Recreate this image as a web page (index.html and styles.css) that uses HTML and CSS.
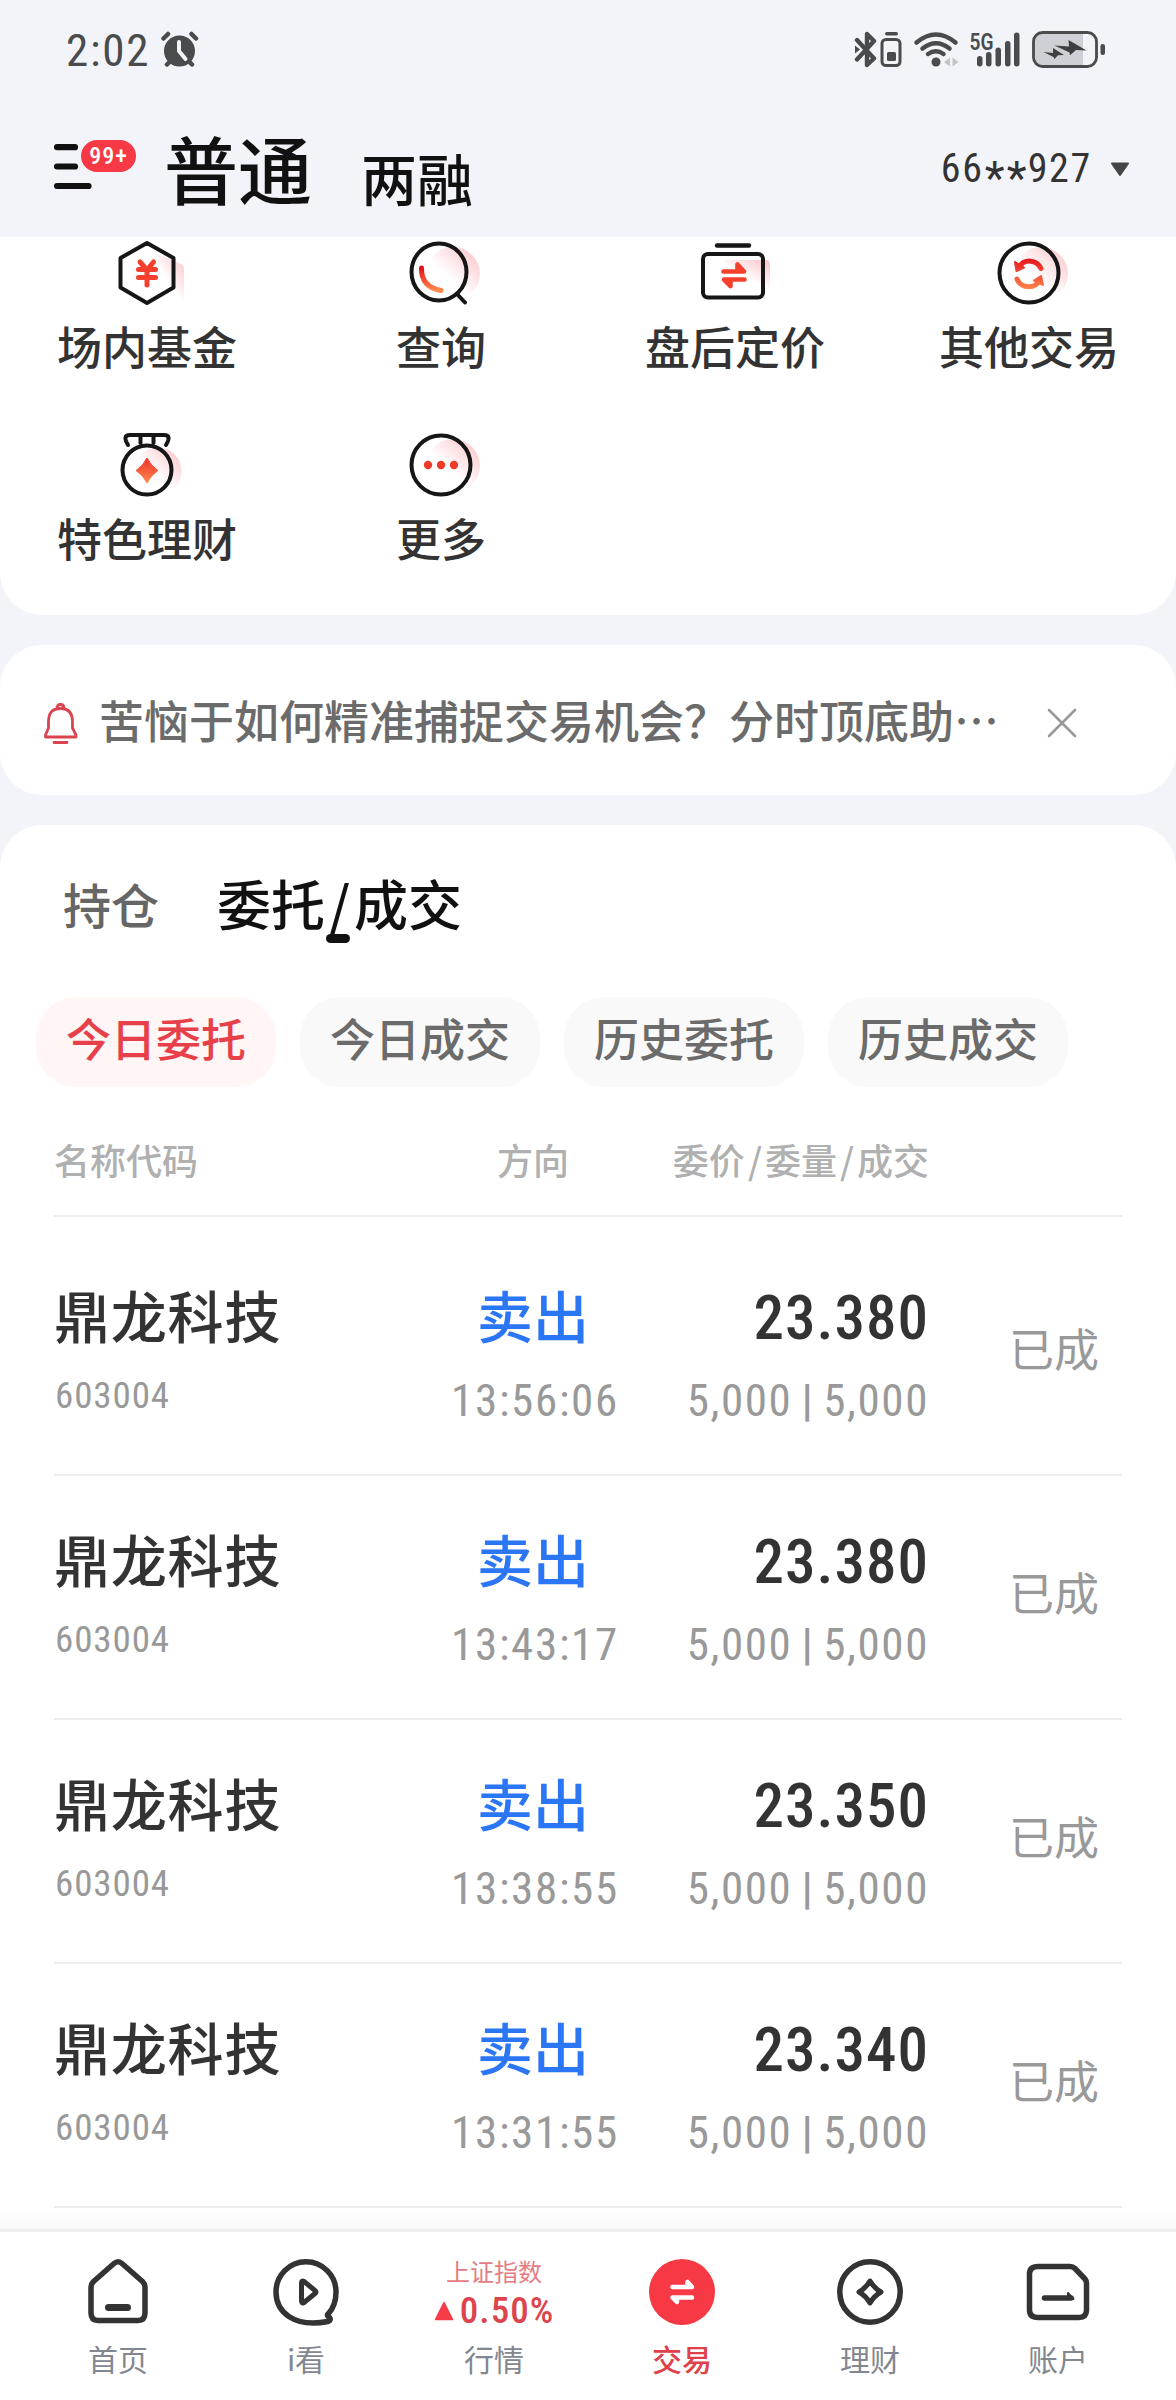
FILE: index.html
```html
<!DOCTYPE html>
<html lang="zh-CN">
<head>
<meta charset="utf-8">
<title>交易</title>
<link rel="stylesheet" href="styles.css">
</head>
<body>
<svg class="defs" width="0" height="0" aria-hidden="true">
  <defs>
    <linearGradient id="hot" x1="0" y1="0" x2="0" y2="1"><stop offset="0" stop-color="#e60f1c"/><stop offset="1" stop-color="#ff8a4c"/></linearGradient>
    <linearGradient id="hotSpan" gradientUnits="userSpaceOnUse" x1="0" y1="-16" x2="0" y2="18"><stop offset="0" stop-color="#e60f1c"/><stop offset="1" stop-color="#ff8a4c"/></linearGradient>
    <linearGradient id="glow" x1="1" y1="0.1" x2="0.5" y2="0.65"><stop offset="0" stop-color="#fbc6c9"/><stop offset="1" stop-color="#fbc6c9" stop-opacity="0"/></linearGradient>
  </defs>
</svg>

<div class="status">
  <div class="status-left">
    <span class="clock num">2:02</span>
    <svg class="alarm" width="38" height="40" viewBox="0 0 38 40"><circle cx="18.500" cy="21" r="15.500" fill="#4a4b4d"/><path d="M2.500 8.500L7 4M35 8.500L30.500 4M6 34.500L8 32.500M31 34.500L29 32.500" stroke="#4a4b4d" stroke-width="4.500" stroke-linecap="round"/><path d="M18 12v9l6.500 8" fill="none" stroke="#f3f4f9" stroke-width="4" stroke-linecap="round" stroke-linejoin="round"/></svg>
  </div>
  <div class="status-right">
    <svg width="252" height="50" viewBox="854 20 252 50" fill="none">
      <path d="M857 40L874 58.500L867 65V34L874 41L857 59.500" stroke="#4a4b4d" stroke-width="4.400" stroke-linecap="round" stroke-linejoin="round"/>
      <path d="M855 45.500l5 4-5 4z" fill="#4a4b4d"/>
      <rect x="882" y="39.500" width="18" height="26" rx="4" stroke="#4a4b4d" stroke-width="3"/>
      <rect x="885" y="32" width="13" height="3.500" rx="1.700" fill="#4a4b4d"/>
      <rect x="887" y="52" width="9" height="9" rx="1.500" fill="#4a4b4d"/>
      <path d="M916.500 42.500Q936 26.500 955.500 42.500M922.500 48.500Q936 38 949.500 48.500M928 54Q936 48.500 943.500 54" stroke="#4a4b4d" stroke-width="4.500" stroke-linecap="round"/>
      <circle cx="936" cy="62" r="4.500" fill="#4a4b4d"/>
      <path d="M950 57.500v9l-6-4.500zM952.500 57.500v9l6-4.500z" fill="#c3c4c8"/>
      <g fill="#4a4b4d"><rect x="977" y="56" width="5.500" height="10.500" rx="2.700"/><rect x="986" y="52" width="5.500" height="14.500" rx="2.700"/><rect x="995.500" y="47.500" width="5.500" height="19" rx="2.700"/><rect x="1005" y="41" width="5.500" height="25.500" rx="2.700"/><rect x="1014" y="32.500" width="5.500" height="34" rx="2.700"/></g>
      <text x="969.500" y="49.500" class="net" textLength="24" lengthAdjust="spacingAndGlyphs">5G</text>
      <path d="M1043 33h40v34h-40q-9 0-9-9v-16q0-9 9-9z" fill="#cfd0d5"/>
      <rect x="1033.500" y="32.500" width="63" height="34" rx="9" stroke="#4a4b4d" stroke-width="2.800"/>
      <rect x="1100.500" y="44" width="4.500" height="11" rx="2.200" fill="#4a4b4d"/>
      <path d="M1054.500 45.500L1069 46.500 1068.500 40 1078 45.500 1086.500 50.500 1076 50 1070 55.200 1069.500 52.500zM1043.500 52L1053 53 1053 48 1064 55 1058 55.200 1054.500 59 1053.500 57z" fill="#3f4042"/>
    </svg>
  </div>
</div>

<header class="header">
  <div class="menu">
    <svg width="40" height="48" viewBox="0 0 40 48"><path d="M3 5.200H21M3 24.500H21M3 44H34.500" stroke="#111" stroke-width="6.200" stroke-linecap="round"/></svg>
    <span class="badge num">99+</span>
  </div>
  <span class="acct-main">普通</span>
  <span class="acct-alt">两融</span>
  <div class="account num">66<i>*</i><i>*</i>927<svg width="20" height="15" viewBox="0 0 20 15"><path d="M2 1.500h16l-8 11.500z" fill="#444547" stroke="#444547" stroke-width="2" stroke-linejoin="round"/></svg></div>
</header>

<main>
<section class="card grid">
  <div class="tool">
    <svg viewBox="-50 -36 100 72"><path d="M8-20L34-9Q37-8 37-4V28Q20 20 8-20z" fill="url(#glow)"/><path d="M0-30L26.500-15V14.500L0 30-26.500 14.500V-15z" fill="none" stroke="#161616" stroke-width="4" stroke-linejoin="round"/><path d="M-7-11L0-3 6.500-11M-8.500-3.500H8.500M-8.500 4.500H8.500M0-3V12" fill="none" stroke="#f4402c" stroke-width="5" stroke-linecap="round"/></svg>
    <span>场内基金</span>
  </div>
  <div class="tool">
    <svg viewBox="-50 -36 100 72"><circle cx="12" cy="1" r="27" fill="url(#glow)"/><ellipse cx="-2" cy="-1" rx="27.500" ry="28.500" fill="none" stroke="#161616" stroke-width="4"/><path d="M16.500 21.500L24 29.500" stroke="#161616" stroke-width="4" stroke-linecap="round"/><path d="M-19.500-5Q-20 14 0 17.500" fill="none" stroke="url(#hot)" stroke-width="5" stroke-linecap="round"/></svg>
    <span>查询</span>
  </div>
  <div class="tool">
    <svg viewBox="-50 -36 100 72"><path d="M-12-13H31Q35-13 35-8V15H18z" fill="url(#glow)"/><rect x="-32" y="-19" width="60" height="43.500" rx="5" fill="none" stroke="#161616" stroke-width="4"/><path d="M-18-27.500H14" stroke="#161616" stroke-width="4.400" stroke-linecap="round"/><path d="M-11.500-1.500H9L2.500-8.500V-3M9.500 6.500H-11L-4.500 13V8" fill="none" stroke="#f4402c" stroke-width="4.600" stroke-linecap="round" stroke-linejoin="round"/></svg>
    <span>盘后定价</span>
  </div>
  <div class="tool">
    <svg viewBox="-50 -36 100 72"><circle cx="12" cy="1" r="27" fill="url(#glow)"/><circle r="29.500" fill="none" stroke="#161616" stroke-width="4"/><path d="M-10-6A12.500 12.500 0 0 1 12-4.500M-12 6A12.500 12.500 0 0 0 11 6.500" fill="none" stroke="url(#hotSpan)" stroke-width="5" stroke-linecap="round"/><path d="M-14-11l9 5.500-7.500 3.500zM14 12l-9-4.500L12 3z" fill="url(#hotSpan)" stroke="url(#hotSpan)" stroke-width="2" stroke-linejoin="round"/></svg>
    <span>其他交易</span>
  </div>
  <div class="tool">
    <svg viewBox="-50 -36 100 72"><circle cx="11" cy="6" r="23.500" fill="url(#glow)"/><circle cy="5" r="24.500" fill="none" stroke="#161616" stroke-width="4"/><path d="M-19-20Q-25-30-17-30H17Q25-30 19-20M-6.500-29V-22M6.500-29V-22" fill="none" stroke="#161616" stroke-width="4" stroke-linecap="round"/><path d="M0-7Q4 1 11 5.500 4 10 0 18-4 10-11 5.500-4 1 0-7z" fill="url(#hotSpan)" stroke="url(#hotSpan)" stroke-linejoin="round"/></svg>
    <span>特色理财</span>
  </div>
  <div class="tool">
    <svg viewBox="-50 -36 100 72"><circle cx="12" cy="1" r="27" fill="url(#glow)"/><circle r="29.500" fill="none" stroke="#161616" stroke-width="4"/><g fill="#ee3a28"><circle cx="-13" r="4.200"/><circle r="4.200"/><circle cx="13" r="4.200"/></g></svg>
    <span>更多</span>
  </div>
</section>

<section class="card notice">
  <svg class="bell" width="34" height="42" viewBox="0 0 34 42" fill="none" stroke="#d9444e" stroke-width="2.800" stroke-linejoin="round" stroke-linecap="round"><path d="M4.500 20C4.500 10 9 6.500 16.500 6.500S28.500 10 28.500 20V26L32 33V35H1.500V33L4.500 26zM13 6.500Q13 2.500 16.500 2.500T20 6.500M10 40.500H23"/></svg>
  <span class="notice-text">苦恼于如何精准捕捉交易机会？分时顶底助…</span>
  <svg class="close" width="30" height="30" viewBox="0 0 30 30"><path d="M2 2L28 28M28 2L2 28" stroke="#999" stroke-width="2.600" stroke-linecap="round"/></svg>
</section>

<section class="card orders">
  <div class="tabs"><span class="tab">持仓</span><span class="tab tab-on">委托<b>/</b>成交</span></div>
  <div class="pills"><span class="pill pill-on">今日委托</span><span class="pill">今日成交</span><span class="pill">历史委托</span><span class="pill">历史成交</span></div>
  <div class="row head"><span>名称代码</span><span class="mid">方向</span><span class="right">委价<b>/</b>委量<b>/</b>成交</span></div>

  <div class="row item">
    <div><div class="name">鼎龙科技</div><div class="code num">603004</div></div>
    <div class="mid"><div class="side">卖出</div><div class="time num">13:56:06</div></div>
    <div class="right"><div class="price num">23.380</div><div class="qty num">5,000<b>|</b>5,000</div></div>
    <div class="state">已成</div>
  </div>
  <div class="row item">
    <div><div class="name">鼎龙科技</div><div class="code num">603004</div></div>
    <div class="mid"><div class="side">卖出</div><div class="time num">13:43:17</div></div>
    <div class="right"><div class="price num">23.380</div><div class="qty num">5,000<b>|</b>5,000</div></div>
    <div class="state">已成</div>
  </div>
  <div class="row item">
    <div><div class="name">鼎龙科技</div><div class="code num">603004</div></div>
    <div class="mid"><div class="side">卖出</div><div class="time num">13:38:55</div></div>
    <div class="right"><div class="price num">23.350</div><div class="qty num">5,000<b>|</b>5,000</div></div>
    <div class="state">已成</div>
  </div>
  <div class="row item">
    <div><div class="name">鼎龙科技</div><div class="code num">603004</div></div>
    <div class="mid"><div class="side">卖出</div><div class="time num">13:31:55</div></div>
    <div class="right"><div class="price num">23.340</div><div class="qty num">5,000<b>|</b>5,000</div></div>
    <div class="state">已成</div>
  </div>
  <div class="fade"></div>
</section>
</main>

<nav class="nav">
  <div class="nav-item">
    <svg viewBox="-36 -36 72 72" fill="none" stroke="#333" stroke-width="5.500" stroke-linejoin="round"><path d="M-4-28.500Q0-32 4-28.500L24.500-10.500Q27-8 27-5V21Q27 28.500 20 28.500H-20Q-27 28.500-27 21V-5Q-27-8-24.500-10.500z"/><path d="M-9.500 15.500H9.500" stroke-width="7" stroke-linecap="round"/></svg>
    <span>首页</span>
  </div>
  <div class="nav-item">
    <svg viewBox="-36 -36 72 72" fill="none" stroke="#333" stroke-width="5.500" stroke-linejoin="round"><path d="M22.500 21.500C27.500 16 30 8 30 0A30 30.200 0 1 0-30 0C-30 20-12 36 22 29.500Q25.500 28 23.500 25.500 20 23.500 22.500 21.500z"/><path d="M-4.500-9Q-4.500-12-2-10.500L9-1.500Q11 0 9 1.500L-2 10.500Q-4.500 12-4.500 9z" stroke-width="5"/></svg>
    <span>i看</span>
  </div>
  <div class="nav-item quote">
    <div class="index-name">上证指数</div>
    <div class="index-val num"><svg width="20" height="20" viewBox="0 0 20 20"><path d="M10 1.500L18.500 18.500H1.500z" fill="#f73b47" stroke="#f73b47" stroke-width="1.500" stroke-linejoin="round"/></svg><em>0.50%</em></div>
    <span>行情</span>
  </div>
  <div class="nav-item on">
    <svg viewBox="-36 -36 72 72"><circle r="33" fill="#f73845"/><path d="M-9.500-5H10L5.500-10V-5.500M10 5.500H-9.500L-5 10V6" fill="none" stroke="#fff" stroke-width="4.500" stroke-linecap="round" stroke-linejoin="round"/></svg>
    <span>交易</span>
  </div>
  <div class="nav-item">
    <svg viewBox="-36 -36 72 72" fill="none" stroke="#333" stroke-width="5.500" stroke-linejoin="round"><circle r="30.200"/><path d="M0-11Q4-4 11 0 4 4 0 11-4 4-11 0-4-4 0-11z" stroke-width="5"/></svg>
    <span>理财</span>
  </div>
  <div class="nav-item">
    <svg viewBox="-36 -36 72 72" fill="none" stroke="#333" stroke-width="5.500" stroke-linejoin="round"><path d="M-20-25.500H12Q15-25.500 17-23.500L27-13Q28.500-11 28.500-9V18Q28.500 25.500 21 25.500H-20Q-28.500 25.500-28.500 18V-18Q-28.500-25.500-20-25.500z"/><path d="M-13.500 6H13" stroke-linecap="round"/><path d="M10 3V1L15.500 7H10z" stroke-width="2" fill="#333"/></svg>
    <span>账户</span>
  </div>
</nav>
</body>
</html>
```
FILE: styles.css
```css
* { box-sizing: border-box; }
body {
  margin: 0;
  width: 1176px;
  height: 2400px;
  overflow: hidden;
  background: #f3f4f9;
  color: #333;
  font-family: "Noto Sans CJK SC", sans-serif;
  font-weight: 500;
  display: flex;
  flex-direction: column;
}
svg { display: block; flex: none; }
b, i, em { font-weight: inherit; font-style: normal; }
.defs { position: absolute; }
.num { font-family: Roboto, "Noto Sans CJK SC", sans-serif; font-stretch: 85%; }

/* system status bar */
.status {
  height: 100px;
  display: flex;
  justify-content: space-between;
  padding: 0 70px 0 66px;
}
.status-left { display: flex; padding-top: 21px; gap: 11px; }
.clock { font-size: 45px; line-height: 60px; font-weight: 400; letter-spacing: 1.8px; color: #4a4b4d; }
.alarm { margin-top: 9px; }
.status-right { padding-top: 20px; }
.net { font: 600 24px Roboto, sans-serif; fill: #4a4b4d; }

/* account header */
.header {
  height: 137px;
  display: flex;
  align-items: flex-start;
  padding: 0 46px 0 54px;
  color: #111;
}
.menu { position: relative; width: 110px; padding-top: 42px; }
.badge {
  position: absolute;
  left: 27px;
  top: 40px;
  width: 55px;
  height: 32px;
  border-radius: 16px;
  background: #f73845;
  color: #fff;
  font-size: 24px;
  line-height: 32px;
  letter-spacing: 1px;
  text-align: center;
}
.acct-main { font-size: 74px; line-height: 100px; margin-top: 17px; }
.acct-alt { font-size: 56px; line-height: 80px; margin: 37px 0 0 49px; }
.account {
  display: flex;
  align-items: center;
  margin: 44px 0 0 auto;
  font-size: 40px;
  line-height: 50px;
  font-weight: 450;
  letter-spacing: 1.7px;
  color: #333;
}
.account i { position: relative; top: 9px; width: 22px; text-align: center; font-size: 46px; letter-spacing: 0; }
.account svg { margin: 0 0 0 18px; }

/* cards */
.card { background: #fff; border-radius: 42px; }
.grid {
  height: 378px;
  border-radius: 0 0 42px 42px;
  display: grid;
  grid-template-columns: repeat(4, 294px);
  grid-auto-rows: 192px;
}
.tool { display: flex; flex-direction: column; align-items: center; }
.tool svg { width: 100px; height: 72px; }
.tool span { font-size: 45px; line-height: 60px; margin-top: 7px; }

.notice {
  height: 150px;
  margin: 30px 0;
  display: flex;
  align-items: center;
  padding: 0 0 0 44px;
}
.bell { margin-top: 6px; }
.notice-text { font-size: 45px; line-height: 60px; color: #6b6b6b; margin: 0 48px 0 21px; }
.close { margin-top: 5px; }

.orders { height: 1404px; border-radius: 42px 42px 0 0; }
.tabs { display: flex; padding: 38px 0 0 63px; height: 172px; align-items: flex-start; }
.tab { font-size: 48px; line-height: 80px; color: #666; margin-right: 58px; }
.tab-on { position: relative; font-size: 54px; color: #111; }
.tab-on b { padding: 0 4px; }
.tab-on::after {
  content: "";
  position: absolute;
  left: 109px;
  top: 71px;
  width: 24px;
  height: 9px;
  border-radius: 4.5px;
  background: #111;
}
.pills { display: flex; gap: 24px; padding-left: 36px; }
.pill {
  width: 240px;
  height: 90px;
  border-radius: 40px;
  background: #f9f9f9;
  color: #6b6b6b;
  font-size: 45px;
  line-height: 82px;
  text-align: center;
}
.pill-on { background: #fff6f5; color: #e8404a; }

.row {
  display: grid;
  grid-template-columns: 363px 232px 280px 1fr;
  margin: 0 54px;
  border-bottom: 2px solid #ededed;
}
.mid { text-align: center; }
.right { text-align: right; }
.head { height: 130px; padding-top: 46px; font-size: 36px; line-height: 52px; color: #b0b0b0; }
.head b { padding: 0 3px; }
.item { height: 244px; }
.head + .item { margin-top: 15px; height: 244px; }
.name, .side { font-size: 56px; line-height: 80px; padding-top: 42px; }
.name { color: #333; letter-spacing: 0.8px; }
.side { color: #2a76f5; }
.code { font-size: 37px; line-height: 50px; margin-top: 17px; color: #999; font-weight: 420; letter-spacing: 0.9px; padding-left: 1px; }
.time, .qty { font-size: 45px; line-height: 60px; margin-top: 17px; color: #999; font-weight: 430; }
.time { letter-spacing: 1.7px; padding-left: 4px; }
.qty { letter-spacing: 1.6px; }
.price { font-size: 61px; line-height: 80px; padding-top: 46px; height: 122px; color: #333; font-weight: 470; letter-spacing: 1px; }
.qty b { margin: 0 9px 0 9px; font-weight: 600; }
.state { font-size: 45px; line-height: 60px; margin: 86px 0 0 80px; color: #999; font-weight: 400; }
.fade { height: 21px; background: linear-gradient(#fff, #f9f9f9); }

/* bottom navigation */
.nav {
  height: 171px;
  flex: none;
  display: grid;
  grid-template-columns: repeat(6, 188px);
  padding: 24px 24px 0;
  background: #fff;
  border-top: 3px solid #ededed;
}
.nav-item { display: flex; flex-direction: column; align-items: center; color: #83878f; font-weight: 400; }
.nav-item > svg { width: 72px; height: 72px; }
.nav-item > span { font-size: 30px; line-height: 40px; margin-top: 10px; }
.nav-item.on { color: #e0404a; font-weight: 500; }
.index-name { font-size: 24px; line-height: 30px; color: #e57c82; }
.index-val { display: flex; align-items: center; gap: 6px; height: 42px; padding-top: 7px; font-size: 37px; line-height: 42px; font-weight: 460; letter-spacing: 1px; color: #dc444e; }
```
